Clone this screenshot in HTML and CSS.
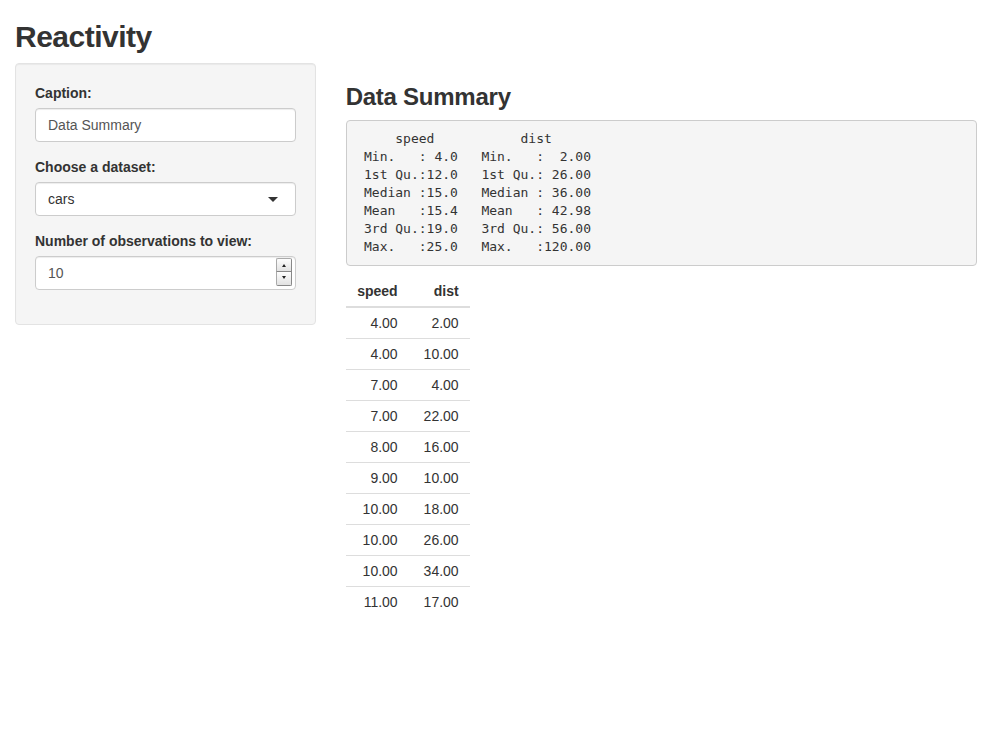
FILE: index.html
```html
<!DOCTYPE html>
<html>
<head>
<meta charset="utf-8">
<title>Reactivity</title>
<link rel="stylesheet" href="styles.css">
</head>
<body>
<div class="container">
  <h2 class="title">Reactivity</h2>
  <div class="row">
    <div class="col-side">
      <form class="well">
        <div class="form-group">
          <label>Caption:</label>
          <input class="form-control" type="text" value="Data Summary">
        </div>
        <div class="form-group">
          <label>Choose a dataset:</label>
          <div class="select-box">cars</div>
        </div>
        <div class="form-group">
          <label>Number of observations to view:</label>
          <div class="num-wrap">
            <input class="form-control" type="number" value="10">
            <div class="spinner">
              <span class="spin up"></span>
              <span class="spin down"></span>
            </div>
          </div>
        </div>
      </form>
    </div>
    <div class="col-main">
      <h3 class="caption">Data Summary</h3>
      <pre class="summary">     speed           dist       
 Min.   : 4.0   Min.   :  2.00  
 1st Qu.:12.0   1st Qu.: 26.00  
 Median :15.0   Median : 36.00  
 Mean   :15.4   Mean   : 42.98  
 3rd Qu.:19.0   3rd Qu.: 56.00  
 Max.   :25.0   Max.   :120.00  </pre>
      <table class="data">
        <thead>
          <tr><th>speed</th><th>dist</th></tr>
        </thead>
        <tbody>
          <tr><td>4.00</td><td>2.00</td></tr>
          <tr><td>4.00</td><td>10.00</td></tr>
          <tr><td>7.00</td><td>4.00</td></tr>
          <tr><td>7.00</td><td>22.00</td></tr>
          <tr><td>8.00</td><td>16.00</td></tr>
          <tr><td>9.00</td><td>10.00</td></tr>
          <tr><td>10.00</td><td>18.00</td></tr>
          <tr><td>10.00</td><td>26.00</td></tr>
          <tr><td>10.00</td><td>34.00</td></tr>
          <tr><td>11.00</td><td>17.00</td></tr>
        </tbody>
      </table>
    </div>
  </div>
</div>
</body>
</html>
```
FILE: styles.css
```css
* { box-sizing: border-box; }
html, body {
  margin: 0;
  padding: 0;
  background: #fff;
}
body {
  font-family: "Liberation Sans", Arial, sans-serif;
  font-size: 14px;
  line-height: 20px;
  color: #333;
}
.container {
  padding: 0 15px;
}
.title {
  font-size: 30px;
  font-weight: bold;
  line-height: 33px;
  margin: 20px 0 10px;
  color: #333;
  letter-spacing: -0.5px;
}
.row {
  display: flex;
  margin: 0 -15px;
}
.col-side {
  width: 33.3333%;
  padding: 0 15px;
}
.col-main {
  width: 66.6667%;
  padding: 0 15px;
}
.well {
  background: #f5f5f5;
  border: 1px solid #e3e3e3;
  border-radius: 4px;
  padding: 19px 19px 19px;
  box-shadow: inset 0 1px 1px rgba(0,0,0,0.05);
  margin: 0;
}
.form-group {
  margin-bottom: 15px;
}
.form-group label {
  display: block;
  font-weight: bold;
  margin-bottom: 5px;
}
.form-control {
  display: block;
  width: 100%;
  height: 34px;
  padding: 6px 12px;
  font-family: "Liberation Sans", Arial, sans-serif;
  font-size: 14px;
  line-height: 20px;
  color: #555;
  background: #fff;
  border: 1px solid #ccc;
  border-radius: 4px;
  box-shadow: inset 0 1px 1px rgba(0,0,0,0.075);
  margin: 0;
}
.select-box {
  position: relative;
  height: 34px;
  padding: 6px 12px;
  border: 1px solid #ccc;
  border-radius: 4px;
  background: #fff;
  color: #333;
  box-shadow: inset 0 1px 1px rgba(0,0,0,0.075);
}
.select-box::after {
  content: "";
  position: absolute;
  right: 17px;
  top: 14px;
  border-style: solid;
  border-width: 5px 5px 0 5px;
  border-color: #333 transparent transparent transparent;
}
.num-wrap {
  position: relative;
}
.num-wrap input::-webkit-inner-spin-button,
.num-wrap input::-webkit-outer-spin-button {
  -webkit-appearance: none;
  margin: 0;
}
.num-wrap input { -moz-appearance: textfield; }
.spinner {
  position: absolute;
  right: 4px;
  top: 2px;
  width: 16px;
  display: flex;
  flex-direction: column;
}
.spin {
  position: relative;
  height: 14px;
  border: 1px solid #aaa;
  border-right-color: #888;
  border-bottom-color: #888;
  background: linear-gradient(#fdfdfd, #e2e2e2);
}
.spin.up { border-radius: 2px 2px 0 0; }
.spin.down { border-radius: 0 0 2px 2px; border-top: none; height: 14px; }
.spin::after {
  content: "";
  position: absolute;
  left: 5px;
  top: 5px;
  border-style: solid;
}
.spin.up::after {
  border-width: 0 2px 3px 2px;
  border-color: transparent transparent #222 transparent;
}
.spin.down::after {
  top: 4px;
  border-width: 3px 2px 0 2px;
  border-color: #222 transparent transparent transparent;
}
.caption {
  font-size: 24px;
  font-weight: bold;
  line-height: 26px;
  margin: 21px 0 10px;
  letter-spacing: -0.25px;
}
.summary {
  margin: 0 0 10px;
  padding: 9px 9.5px;
  font-family: "DejaVu Sans Mono", monospace;
  font-size: 13px;
  line-height: 18px;
  color: #333;
  background: #f5f5f5;
  border: 1px solid #ccc;
  border-radius: 4px;
  white-space: pre;
}
.data {
  border-collapse: collapse;
  border-spacing: 0;
}
.data th, .data td {
  padding: 5px 11px 5px 5px;
  line-height: 20px;
  text-align: right;
}
.data th {
  width: 62px;
  font-weight: bold;
  border-bottom: 2px solid #ddd;
  vertical-align: bottom;
}
.data tbody tr + tr td {
  border-top: 1px solid #ddd;
}
.data td:first-child, .data th:first-child {
  padding-right: 10px;
}
```
